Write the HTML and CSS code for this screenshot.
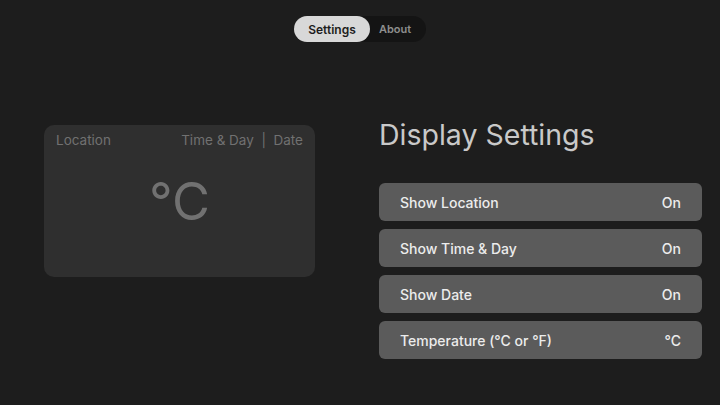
FILE: index.html
```html
<!DOCTYPE html>
<html lang="en">
<head>
    <meta charset="UTF-8">
    <meta name="viewport" content="width=device-width, initial-scale=1.0">
    <title>Weather Settings</title>
    <link rel="stylesheet" href="styles.css">
</head>
<body>
    <nav class="tabs">
        <button class="tab active">Settings</button>
        <button class="tab">About</button>
    </nav>

    <main class="main">
        <div class="preview">
            <div class="preview-top">
                <span>Location</span>
                <span>Time &amp; Day &nbsp;|&nbsp; Date</span>
            </div>
            <div class="preview-temp">°C</div>
        </div>

        <section class="settings">
            <h1 class="settings-title">Display Settings</h1>
            <ul class="settings-list">
                <li class="row"><span>Show Location</span><span>On</span></li>
                <li class="row"><span>Show Time &amp; Day</span><span>On</span></li>
                <li class="row"><span>Show Date</span><span>On</span></li>
                <li class="row"><span>Temperature (°C or °F)</span><span>°C</span></li>
            </ul>
        </section>
    </main>
</body>
</html>
```

FILE: styles.css
```css
* {
    margin: 0;
    padding: 0;
    box-sizing: border-box;
    font-family: Inter, 'Noto Sans', sans-serif;
}

body {
    width: 720px;
    height: 405px;
    overflow: hidden;
    background: #1d1d1d;
    color: #fff;
}

.tabs {
    display: flex;
    width: 132px;
    height: 26px;
    margin: 16px auto 0;
    background: #141414;
    border-radius: 13px;
}

.tab {
    border: none;
    background: transparent;
    color: #8e8e8e;
    font-size: 11px;
    font-weight: 600;
    padding: 0 9px;
    border-radius: 13px;
    cursor: pointer;
}

.tab.active {
    width: 76px;
    background: #d8d8d8;
    color: #1d1d1d;
    font-size: 12px;
}

.main {
    display: flex;
    align-items: flex-start;
    gap: 64px;
    padding: 0 18px 0 44px;
}

.preview {
    width: 271px;
    height: 152px;
    margin-top: 83px;
    background: #2f2f2f;
    border-radius: 10px;
    padding: 7px 12px;
}

.preview-top {
    display: flex;
    justify-content: space-between;
    font-size: 13.5px;
    color: #717171;
}

.preview-temp {
    text-align: center;
    font-size: 52px;
    font-weight: 400;
    color: #717171;
    margin-top: 28px;
    line-height: 1;
}

.settings {
    flex: 1;
    margin-top: 75px;
}

.settings-title {
    font-size: 28.5px;
    font-weight: 400;
    color: #c9c9c9;
    margin-bottom: 31px;
}

.settings-list {
    list-style: none;
    display: flex;
    flex-direction: column;
    gap: 8px;
}

.row {
    display: flex;
    justify-content: space-between;
    align-items: center;
    height: 38px;
    padding: 0 21px;
    background: #5b5b5b;
    border-radius: 6px;
    font-size: 14px;
    font-weight: 500;
    color: #ececec;
}
```
